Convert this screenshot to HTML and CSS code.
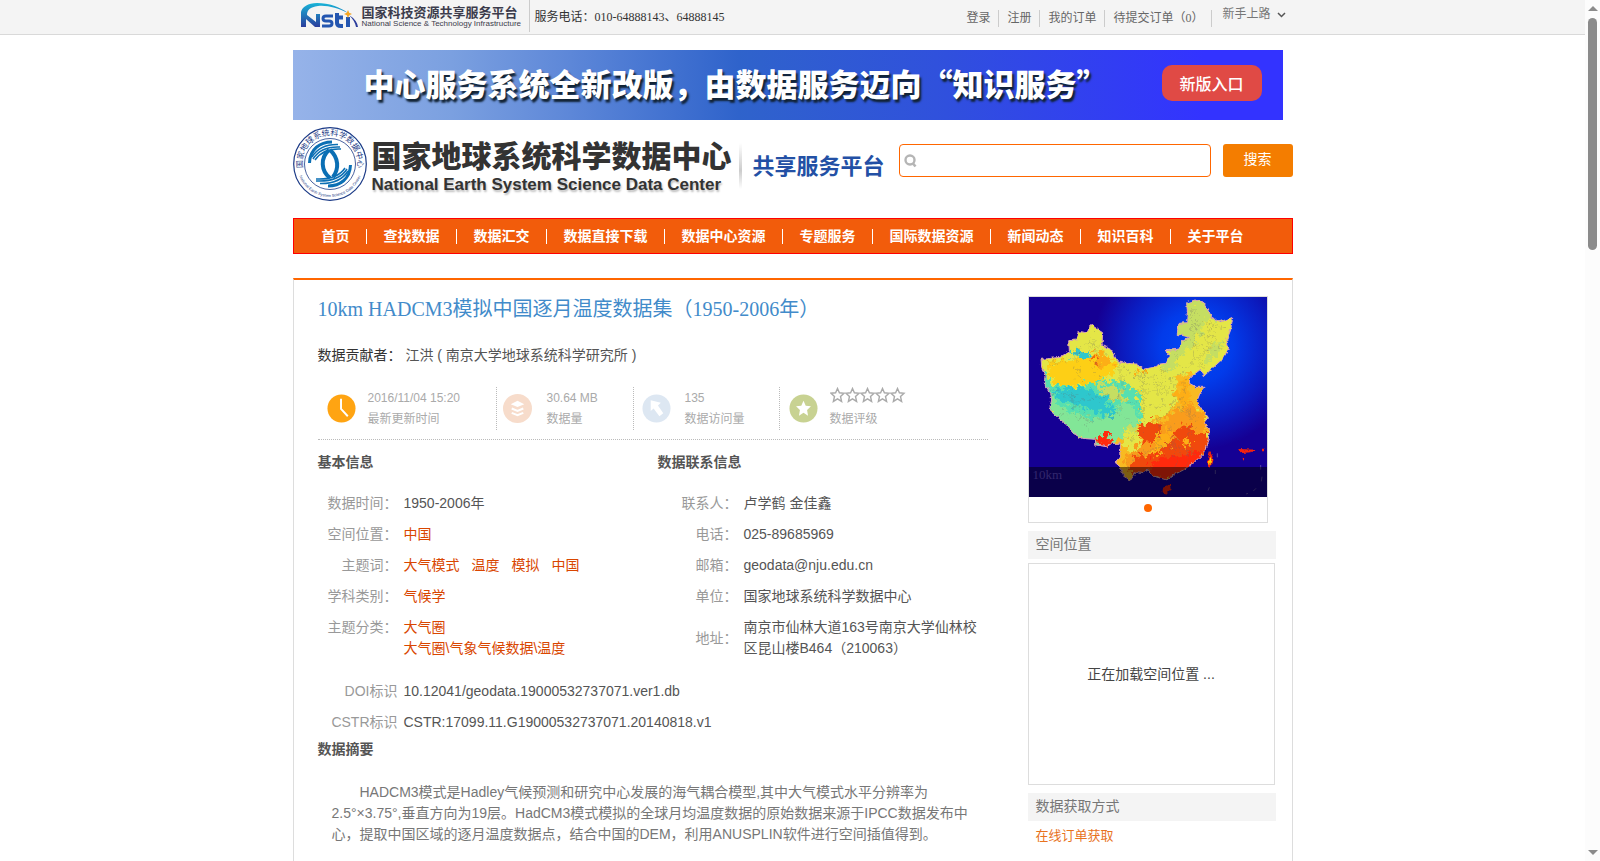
FILE: index.html
```html
<!DOCTYPE html>
<html lang="zh-CN">
<head>
<meta charset="utf-8">
<title>国家地球系统科学数据中心</title>
<link rel="stylesheet" href="styles.css">
</head>
<body>
<header class="topbar">
  <div class="topbar-inner">
    <a class="nsti" href="#">
      <svg class="nsti-mark" viewBox="0 0 58 26" aria-hidden="true">
        <defs><linearGradient id="ng" x1="0" y1="0" x2="0" y2="1"><stop offset="0" stop-color="#18b4d8"/><stop offset="1" stop-color="#2b3d9c"/></linearGradient></defs>
        <path fill="url(#ng)" d="M0 24V9C1 4 7 0 16 0c12 0 23 4 31 10C37 5 26 2 17 3 9 4 6 7 6 12v0l9 7v-8h4v13h-5L5 16v8z"/>
        <path fill="none" stroke="#2456b0" stroke-width="3" d="M32 13h-7q-3 0-3 2.500t3 2.500h3q3 0 3 2.500t-3 2.500h-7"/>
        <path fill="none" stroke="#2456b0" stroke-width="4" d="M36 10v10q0 3 4 3h2M34 14.500h8M47 14v10"/>
        <path fill="#f5a623" d="M47 7l1.200 2.800L51 11l-2.800 1.200L47 15l-1.200-2.800L43 11l2.800-1.200z"/>
        <path fill="#2b3d9c" d="M48 12q8 5 9 12h-2q-1-6-7-12z"/>
      </svg>
      <span class="nsti-text"><b class="nsti-cn">国家科技资源共享服务平台</b><span class="nsti-en">National Science &amp; Technology Infrastructure</span></span>
    </a>
    <span class="phone">服务电话：010-64888143、64888145</span>
    <nav class="account">
      <a href="#">登录</a><a href="#">注册</a><a href="#">我的订单</a><a href="#">待提交订单（0）</a>
    </nav>
    <button class="guide" type="button">新手上路
      <svg viewBox="0 0 9 6" aria-hidden="true"><path d="M1 1l3.500 3.500L8 1" fill="none" stroke="#555" stroke-width="1.500"/></svg>
    </button>
  </div>
</header>

<div class="wrap">
  <div class="banner">
    <strong class="banner-text">中心服务系统全新改版，由数据服务迈向“知识服务”</strong>
    <a class="banner-link" href="#">新版入口</a>
  </div>

  <div class="brand">
    <svg class="seal" viewBox="0 0 74 74" role="img" aria-label="国家地球系统科学数据中心">
      <defs>
        <path id="arcTop" d="M11 45A27.500 27.500 0 1 1 63 45"/>
        <path id="arcBottom" d="M5 45A33 33 0 0 0 69 45"/>
      </defs>
      <circle cx="37" cy="37" r="36.300" fill="#fff" stroke="#1b3a86" stroke-width="1.200"/>
      <circle cx="37" cy="37" r="25.500" fill="none" stroke="#1b3a86" stroke-width="0.800"/>
      <text class="seal-cn"><textPath href="#arcTop" startOffset="50%">国家地球系统科学数据中心</textPath></text>
      <text class="seal-en"><textPath href="#arcBottom" startOffset="50%">National Earth System Science Data Center</textPath></text>
      <g fill="none" stroke="#0b6fb4">
        <path stroke-width="3" d="M16.500 36C17 22 27 15 39 15"/>
        <path stroke-width="1.500" d="M19 30q8-13 26-12.500M20 32q8-13 27-12M22 33q8-12 26-11"/>
        <path stroke-width="4" d="M36 23c-9 8-8 21 1 28"/>
        <path stroke-width="4" d="M37 23c9 8 9 19 3 27"/>
        <path stroke-width="3" d="M57.500 38C57 52 47 59 35 59"/>
        <path stroke-width="1.500" d="M55 44q-8 13-28 12.500M54 42q-8 13-31 12M52 41q-8 12-29 11"/>
      </g>
    </svg>
    <h1 class="brand-name"><span class="brand-cn">国家地球系统科学数据中心</span><span class="brand-en">National Earth System Science Data Center</span></h1>
    <span class="brand-rule"></span>
    <span class="brand-sub">共享服务平台</span>
    <form class="search">
      <label class="search-field">
        <svg viewBox="0 0 13 14" aria-hidden="true"><circle cx="6" cy="6" r="4.500" fill="none" stroke="#b5b5b5" stroke-width="2.400"/><path d="M9 9.500l2.500 3" stroke="#b5b5b5" stroke-width="2.600"/></svg>
        <input type="text" aria-label="搜索">
      </label>
      <button type="button">搜索</button>
    </form>
  </div>

  <nav class="mainnav">
    <a href="#">首页</a><a href="#">查找数据</a><a href="#">数据汇交</a><a href="#">数据直接下载</a><a href="#">数据中心资源</a><a href="#">专题服务</a><a href="#">国际数据资源</a><a href="#">新闻动态</a><a href="#">知识百科</a><a href="#">关于平台</a>
  </nav>

  <div class="panel">
    <main class="detail">
      <h2 class="title">10km HADCM3模拟中国逐月温度数据集（1950-2006年）</h2>
      <p class="contrib"><span>数据贡献者：</span> 江洪 ( 南京大学地球系统科学研究所 )</p>

      <ul class="stats">
        <li class="stat stat-time">
          <svg viewBox="0 0 30 30" aria-hidden="true"><circle cx="15" cy="15" r="14.500" fill="#ffa412"/><path d="M14.500 5v10.500l7 7.500" fill="none" stroke="#fff" stroke-width="2"/></svg>
          <p>2016/11/04 15:20<br>最新更新时间</p>
        </li>
        <li class="stat stat-size">
          <svg viewBox="0 0 30 30" aria-hidden="true"><circle cx="15" cy="15" r="15" fill="#f7dccb"/><path d="M15 7l7 3.500-7 3-7-3z" fill="#fff"/><path d="M9 15l6 2.500 6-2.500M9 19.500l6 2.500 6-2.500" fill="none" stroke="#fff" stroke-width="2"/></svg>
          <p>30.64 MB<br>数据量</p>
        </li>
        <li class="stat stat-visits">
          <svg viewBox="0 0 30 30" aria-hidden="true"><circle cx="15" cy="15" r="14.500" fill="#dde7f2"/><path d="M9 6.500l10.500 2.500-3 3 5.500 8-4 3-6-8-3 2.500z" fill="#fff"/></svg>
          <p>135<br>数据访问量</p>
        </li>
        <li class="stat stat-rate">
          <svg viewBox="0 0 30 30" aria-hidden="true"><circle cx="15" cy="15" r="14.500" fill="#c8d292"/><path d="M15 7l2.300 5.200 5.400.5-4 3.900 1 5.800L15 19.500l-4.700 2.900 1-5.800-4-3.900 5.400-.5z" fill="#fff"/></svg>
          <p>
            <svg class="stars" viewBox="0 0 76 16" role="img" aria-label="0 / 5">
              <defs><path id="st" d="M7.500 1.500l1.900 4.300 4.600.4-3.500 3.300 1.100 4.900-4.100-2.600-4.100 2.600 1.100-4.900L1 6.200l4.600-.4z" fill="none" stroke="#aaa" stroke-width="1.400"/></defs>
              <use href="#st"/><use href="#st" x="15"/><use href="#st" x="30"/><use href="#st" x="45"/><use href="#st" x="60"/>
            </svg>数据评级</p>
        </li>
      </ul>

      <div class="info">
        <section>
          <h3>基本信息</h3>
          <table class="fields">
            <tr><th scope="row">数据时间：</th><td>1950-2006年</td></tr>
            <tr><th scope="row">空间位置：</th><td><a href="#">中国</a></td></tr>
            <tr><th scope="row">主题词：</th><td class="tags"><a href="#">大气模式</a><a href="#">温度</a><a href="#">模拟</a><a href="#">中国</a></td></tr>
            <tr><th scope="row">学科类别：</th><td><a href="#">气候学</a></td></tr>
            <tr class="top"><th scope="row">主题分类：</th><td><a href="#">大气圈</a><br><a href="#">大气圈\气象气候数据\温度</a></td></tr>
          </table>
        </section>
        <section>
          <h3>数据联系信息</h3>
          <table class="fields">
            <tr><th scope="row">联系人：</th><td>卢学鹤 金佳鑫</td></tr>
            <tr><th scope="row">电话：</th><td>025-89685969</td></tr>
            <tr><th scope="row">邮箱：</th><td>geodata@nju.edu.cn</td></tr>
            <tr><th scope="row">单位：</th><td>国家地球系统科学数据中心</td></tr>
            <tr><th scope="row">地址：</th><td>南京市仙林大道163号南京大学仙林校区昆山楼B464（210063）</td></tr>
          </table>
        </section>
      </div>
      <table class="fields ids">
        <tr><th scope="row">DOI标识</th><td>10.12041/geodata.19000532737071.ver1.db</td></tr>
        <tr><th scope="row">CSTR标识</th><td>CSTR:17099.11.G19000532737071.20140818.v1</td></tr>
      </table>
      <h3>数据摘要</h3>
      <p class="abstract">HADCM3模式是Hadley气候预测和研究中心发展的海气耦合模型,其中大气模式水平分辨率为2.5°×3.75°,垂直方向为19层。HadCM3模式模拟的全球月均温度数据的原始数据来源于IPCC数据发布中心，提取中国区域的逐月温度数据点，结合中国的DEM，利用ANUSPLIN软件进行空间插值得到。</p>
    </main>

    <aside class="side">
      <figure class="thumb">
        <div class="thumb-pic">
        <svg viewBox="57 51 714 600" preserveAspectRatio="none" role="img" aria-label="中国逐月温度分布图">
          <defs>
            <radialGradient id="sea" gradientUnits="userSpaceOnUse" cx="560" cy="200" r="310"><stop offset="0" stop-color="#0148f8"/><stop offset=".35" stop-color="#023bea"/><stop offset=".7" stop-color="#0b1cc0"/><stop offset="1" stop-color="#150094"/></radialGradient>
            <filter id="rough" x="-5%" y="-5%" width="110%" height="110%"><feTurbulence type="fractalNoise" baseFrequency="0.060" numOctaves="4" seed="4"/><feDisplacementMap in="SourceGraphic" scale="50" xChannelSelector="R" yChannelSelector="G"/></filter>
            <filter id="edge" x="-5%" y="-5%" width="110%" height="110%"><feTurbulence type="fractalNoise" baseFrequency="0.080" numOctaves="2" seed="9"/><feDisplacementMap in="SourceGraphic" scale="12" xChannelSelector="R" yChannelSelector="G"/></filter>
            <clipPath id="land"><path id="cn" d="M93 238L112 236 150 232 178 214 176 182 200 180 208 155 232 158 240 135 252 132 262 148 278 158 276 195 305 210 322 245 350 250 378 252 402 268 430 262 450 252 465 250 478 228 468 212 500 208 520 182 540 172 500 162 508 130 530 128 532 90 530 68 555 60 580 66 595 90 605 112 632 125 668 112 662 150 650 180 656 205 640 235 610 262 580 290 572 268 540 292 538 310 560 322 585 322 570 340 560 365 585 400 595 412 580 430 598 445 595 480 580 520 550 550 520 570 490 585 470 600 430 588 415 570 400 578 380 575 362 600 340 585 330 560 316 548 333 525 330 490 305 490 290 500 258 495 255 478 215 475 190 460 165 430 135 405 118 390 125 360 122 340 105 315 108 290 95 262Z"/></clipPath>
          </defs>
          <rect x="57" y="51" width="714" height="600" fill="#150094"/>
          <rect x="57" y="51" width="714" height="600" fill="url(#sea)"/>
          <g filter="url(#edge)">
            <g clip-path="url(#land)">
              <rect x="80" y="50" width="600" height="570" fill="#e4e646"/>
              <g filter="url(#rough)">
                <path fill="#c5de62" d="M500 60h100l30 50-50 20-20 50-50 50-20 40-30 0 20-70zM600 200l40-20-20 50-30 20z"/>
                <path fill="#fdcf16" d="M110 245l90-8 60-5 50 5 15 30-40 30-50 12-70 10-50-30z"/>
                <path fill="#fdae16" d="M240 220l40-6 32 40-50 8zM365 262l45 10-30 12z"/>
                <path fill="#f06a10" d="M245 230l20 4-5 16-14-6z"/>
                <path fill="#57dfb0" d="M90 255l35 55 70 12 70-20 60-2 60 35 10 60-5 60-35 60-50-10-90-20-60-30-60-90z"/>
                <path fill="#82e697" d="M120 350l60 40 70 30 90-50 40 20 10 50-50 65-90-10-90-30-55-90z"/>
                <path fill="#2dc7cd" d="M130 330l50-10 70 10 40 25 30 50-30 6-60-30-80-20zM185 205l60 24-20 8-55-14z"/>
                <path fill="#c5de62" d="M262 310l70 20 20 35-20 6-55-30zM340 450l40-15 30 30-10 60-40 30-25-20z"/>
                <path fill="#f8ba20" d="M500 290l50-10 40 45-20 50 30 80-20 60-100 60-160 40-40-60 40-65 40-30 50-30 80-40z"/>
                <path fill="#e4e646" d="M345 450l45 5 10 30-30 40-25-20zM440 320l50 0 10 50-70 20z"/>
                <path fill="#f99c1c" d="M485 400l60-30 50 50-20 40-70 10-90 50-60 50-15-30 80-80z"/>
                <path fill="#f04a10" d="M390 440l30-20 40 12-15 40-30 22-25-18zM490 460l30-25 55 30 20-15v60l-60 60-90 30-90-20 20-50 60-10 50-30z"/>
                <path fill="#ff2a08" d="M420 540l60-10 100-20-20 50-90 40-50-10zM255 480l40-20 12 30-30 16z"/>
                <path fill="#fdae16" d="M440 470l30-25 15 15-25 50-30 20zM500 340l30-50 12 60-20 50zM520 480l20-10 5 20-20 10z"/>
              </g>
              <g fill="none" stroke="#666" stroke-opacity=".4" stroke-width="2" filter="url(#rough)">
                <path d="M110 250l80-10 60-50 60 40 90 80 60 10 50-40 60-50 50-50M400 270v160l-40 60M430 290l60 10 10 80-60 40 10 90M120 330l90 30 90-10 100 30 90-10 80 50M150 400l90 20 90-20 70 60M540 100l20 60 60 20M510 170l70 40 60-10M530 300l-10 90 50 60M340 560l60-50 90-10 90 20M480 430l20 130M540 420l-10 140M250 150l10 140M200 200l10 120M180 330l60 130M330 260v130M540 80l40 50 70 10M560 130l-10 100 40 40M600 130l-10 90M350 280l90 20M370 330h110M460 260v110M500 220l20 60"/>
              </g>
            </g>
            <use href="#cn" fill="none" stroke="#dba0b8" stroke-width="3"/>
            <path fill="#f5230c" d="M600 515l8 15-4 28-9 8-2-25zM685 507l54 2-18 8-30 3zM697 530l9 3-6 9zM756 506h6v8h-6zM456 625l24-12 2 15-14 14-13-6z"/>
            <path fill="#fd0" d="M601 530l3 8-3 18-4-10z"/>
          </g>
          <path fill="none" stroke="#776bb0" stroke-width="2" d="M622 520v12M616 570v12M598 622l-4 10M752 555v14M756 590l-2 14M738 625l-8 8M714 640l-6 2"/>
        </svg>
        <figcaption>10km</figcaption>
        </div>
        <button class="dot" type="button" aria-label="第1张"></button>
      </figure>
      <h4>空间位置</h4>
      <div class="map">正在加载空间位置 ...</div>
      <h4>数据获取方式</h4>
      <a class="order" href="#">在线订单获取</a>
    </aside>
  </div>
</div>
<div class="scrollbar" aria-hidden="true"><i class="arrow up"></i><i class="grip"></i><i class="arrow down"></i></div>
</body>
</html>
```
FILE: styles.css
```css
* { box-sizing: border-box; }
html { height: 100%; overflow: hidden; }
body {
  margin: 0;
  padding-right: 15px;
  background: #fff;
  color: #555;
  font: 14px/21px "Liberation Sans", "Noto Sans CJK SC", sans-serif;
}
h1, h2, h3, h4, p, ul, figure { margin: 0; padding: 0; font-weight: normal; }
a { color: inherit; text-decoration: none; }
button { border: 0; padding: 0; background: none; cursor: pointer; }
svg { display: block; }

/* Top bar */
.topbar {
  height: 35px;
  background: #f4f4f4;
  border-bottom: 1px solid #d9d9d9;
  font: 12px/17px "Liberation Serif", "Noto Sans CJK SC", serif;
}
.topbar-inner { width: 1000px; margin: 0 auto; display: flex; align-items: flex-start; }
.nsti {
  display: flex;
  gap: 3px;
  height: 32px;
  width: 237px;
  padding: 3px 0 0 8px;
  border-right: 1px solid #ccc;
}
.nsti-mark { width: 58px; height: 26px; flex: none; }
.nsti-text { display: flex; flex-direction: column; color: #3c3c4c; white-space: nowrap; }
.nsti-cn { font: bold 13px/17px "Noto Sans CJK SC", sans-serif; }
.nsti-en { font: 8px/8px "Liberation Sans", sans-serif; }
.phone { padding: 9px 0 0 5px; color: #333; }
.account { display: flex; margin-left: auto; padding-top: 10px; color: #666; }
.account a { padding: 0 8px; border-right: 1px solid #ccc; }
.guide {
  display: flex;
  align-items: center;
  gap: 6px;
  padding: 6px 7px 0 10px;
  color: #777;
  font: inherit;
}
.guide svg { width: 9px; height: 6px; }

.wrap { width: 1000px; margin: 15px auto 0; }

/* Banner */
.banner {
  display: flex;
  align-items: center;
  justify-content: space-between;
  width: 990px;
  height: 70px;
  padding: 0 21px 4px 71px;
  background: linear-gradient(90deg, #96b3e9, #7ba0e0 16%, #5d87d8 28%, #2f63cb 45%, #3050dd 66%, #3333ff 92%);
}
.banner-text { color: #fff; font: 900 31px/44px "Noto Sans CJK SC", sans-serif; text-shadow: 2px 3px 2px #123; white-space: nowrap; }
.banner-link {
  width: 100px;
  border-radius: 10px;
  background: #e04a45;
  color: #fff;
  text-align: center;
  font: 500 16px/36px "Noto Sans CJK SC", sans-serif;
}

/* Brand and search */
.brand { display: flex; align-items: flex-start; padding-top: 7px; height: 98px; }
.seal { width: 74px; height: 74px; flex: none; }
.seal-cn { font: 8px "Noto Sans CJK SC", sans-serif; fill: #1b3a86; text-anchor: middle; }
.seal-en { font: 4px "Liberation Sans", sans-serif; fill: #1b3a86; text-anchor: middle; }
.brand-name { display: flex; flex-direction: column; margin-left: 5px; padding-top: 7px; color: #333; white-space: nowrap; }
.brand-cn { font: 900 30px/41px "Noto Sans CJK SC", sans-serif; }
.brand-en { font: bold 17px/20px "Liberation Sans", sans-serif; text-shadow: 1px 2px 2px #bbb; }
.brand-rule {
  width: 3px;
  height: 46px;
  margin: 16px 0 0 7px;
  background: linear-gradient(#fff, #ccc 60%, #fff);
}
.brand-sub {
  margin: 14px 0 0 11px;
  color: #2350a5;
  font: bold 22px/46px "Noto Sans CJK SC", sans-serif;
  white-space: nowrap;
}
.search { display: flex; gap: 12px; margin-left: auto; padding-top: 17px; }
.search-field {
  display: flex;
  align-items: center;
  width: 312px;
  height: 33px;
  padding-left: 4px;
  border: 1px solid #f60;
  border-radius: 4px;
  background: #fff;
}
.search-field svg { width: 13px; height: 14px; }
.search-field input { flex: 1; min-width: 0; border: 0; outline: 0; background: none; font: inherit; }
.search button { width: 70px; height: 33px; padding-bottom: 2px; border-radius: 3px; background: #f47d00; color: #fff; font: inherit; }

/* Main navigation */
.mainnav {
  display: flex;
  align-items: center;
  height: 36px;
  padding-left: 11px;
  border: 1px solid #f00;
  background: #f25c0b;
  color: #fff;
  font-weight: bold;
  line-height: 15px;
}
.mainnav a { padding: 0 16px 0 17px; border-left: 1px solid #fff; }
.mainnav a:first-child { border-left: 0; }

/* Detail panel */
.panel {
  display: flex;
  justify-content: space-between;
  margin-top: 24px;
  padding: 16px 16px 60px 24px;
  border: 1px solid #ddd;
  border-top: 2px solid #f60;
}
.detail { width: 670px; }
.title { color: #428bca; font: 20px/26px "Liberation Serif", "Noto Sans CJK SC", serif; }
.contrib { margin-top: 23px; }
.contrib span { color: #333; }

.stats {
  display: flex;
  margin-top: 17px;
  padding: 4px 0 9px;
  border-bottom: 1px dotted #bbb;
  list-style: none;
  color: #aaa;
  font-size: 12px;
}
.stat { display: flex; align-items: center; gap: 12px; height: 43px; border-right: 1px dotted #bbb; }
.stat > svg { width: 29px; height: 29px; flex: none; }
.stat-time { width: 179px; padding-left: 9px; }
.stat-size { width: 137px; padding-left: 6px; gap: 15px; }
.stat-visits { width: 146px; padding-left: 8px; gap: 14px; }
.stat-rate { padding-left: 9px; border-right: 0; }
.stars { width: 76px; height: 16px; margin-bottom: 6px; }

.info { display: flex; margin-top: 12px; }
.info section { width: 340px; }
.info section:last-child { width: 330px; }
h3 { font-weight: bold; font-size: 14px; line-height: 21px; color: #555; }
.fields { width: 100%; margin-top: 15px; border-collapse: collapse; table-layout: fixed; }
.fields th { width: 80px; padding: 5px 0; color: #999; font-weight: normal; text-align: right; }
.fields td { padding: 5px 3px 5px 6px; }
.fields a { color: #d94600; }
.fields .top th { vertical-align: top; }
.tags a { margin-right: 12px; }
.ids { margin: 12px 0 1px; }
.abstract { margin: 22px 14px 0; color: #777; text-indent: 28px; }

/* Sidebar */
.side { width: 248px; }
.thumb { width: 240px; height: 227px; border: 1px solid #ddd; }
.thumb-pic { position: relative; }
.thumb-pic svg { width: 100%; height: 200px; }
.thumb figcaption {
  position: absolute;
  inset: auto 0 0 0;
  height: 30px;
  padding-left: 4px;
  background: rgba(0, 0, 0, .5);
  color: #33276e;
  font: 13px/16px "Liberation Serif", serif;
}
.dot { display: block; width: 8px; height: 8px; margin: 7px auto 0; border-radius: 50%; background: #f60; }
.side h4 { margin-top: 8px; padding: 0 0 2px 8px; background: #f4f4f4; color: #777; font-size: 14px; line-height: 26px; }
.map {
  display: flex;
  align-items: center;
  justify-content: center;
  width: 247px;
  height: 222px;
  margin-top: 4px;
  border: 1px solid #ddd;
  color: #444;
}
.order { display: block; padding: 4px 0 0 8px; color: #e8731e; font-size: 13px; }

/* Scroll bar */
.scrollbar {
  position: fixed;
  inset: 0 0 0 auto;
  width: 15px;
  padding: 6px 3px;
  display: flex;
  flex-direction: column;
  background: #fcfcfc;
}
.arrow { border: 0 solid transparent; border-width: 0 5px; }
.up { border-bottom: 5px solid #8b8b8b; }
.down { margin-top: auto; border-top: 5px solid #8b8b8b; }
.grip { height: 27vh; margin-top: 7px; border-radius: 5px; background: #8b8b8b; }
```
